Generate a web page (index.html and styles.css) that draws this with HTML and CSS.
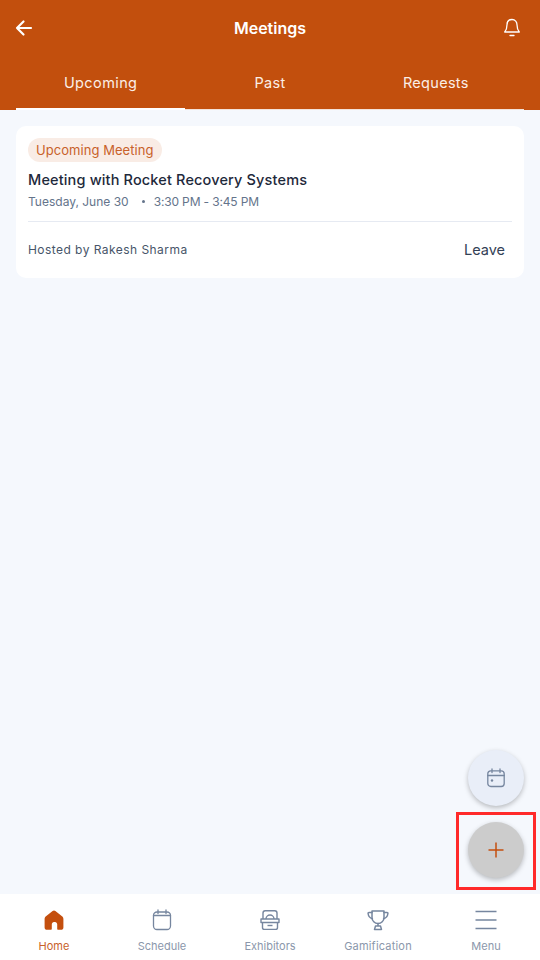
FILE: index.html
```html
<!DOCTYPE html>
<html>
<head>
    <title>Meetings</title>
    <meta charset="UTF-8">
    <link rel="stylesheet" href="styles.css">
</head>
<body>
    <div class="page">
        <header class="top">
            <div class="top_bar">
                <svg class="top_icon" viewBox="0 0 20 20" fill="none" stroke="#fff" stroke-width="2.200" stroke-linecap="round" stroke-linejoin="round">
                    <path d="M17 10H3M9.500 3.500 3 10l6.500 6.500"/>
                </svg>
                <h1>Meetings</h1>
                <svg class="top_icon" viewBox="0 0 20 20" fill="none" stroke="#fff" stroke-width="1.300" stroke-linecap="round" stroke-linejoin="round">
                    <path d="M10 1.500c-3.200 0-5 2.400-5 5.300 0 3.700-.6 5.300-2.300 7.200h14.600c-1.700-1.900-2.300-3.500-2.300-7.200 0-2.900-1.800-5.300-5-5.300Z"/>
                    <path d="M8 17.500h4"/>
                </svg>
            </div>
            <nav class="tabs">
                <div class="tab tab_on">Upcoming</div>
                <div class="tab">Past</div>
                <div class="tab tab_last">Requests</div>
            </nav>
        </header>

        <main class="content">
            <section class="card">
                <span class="tag">Upcoming Meeting</span>
                <h2>Meeting with Rocket Recovery Systems</h2>
                <div class="when">
                    <span>Tuesday, June 30</span>
                    <i></i>
                    <span class="time">3:30 PM - 3:45 PM</span>
                </div>
                <div class="card_foot">
                    <span class="host">Hosted by Rakesh Sharma</span>
                    <span class="leave">Leave</span>
                </div>
            </section>

            <div class="fabs">
                <div class="fab">
                    <svg width="20" height="20" viewBox="0 0 20 20" fill="none" stroke="#76869f" stroke-width="1.300" stroke-linecap="round">
                        <rect x="1.800" y="2.800" width="16.400" height="15.700" rx="3"/>
                        <path d="M1.800 7.500h16.400M6 1v3.500M14 1v3.500"/>
                        <circle cx="6" cy="12.500" r="1.200" fill="#76869f" stroke="none"/>
                    </svg>
                </div>
                <div class="fab_mark">
                    <div class="fab fab_add">
                        <svg width="18" height="18" viewBox="0 0 18 18" fill="none" stroke="#c44f0e" stroke-width="1.500">
                            <path d="M1.500 9h15M9 1.500v15"/>
                        </svg>
                    </div>
                </div>
            </div>
        </main>

        <footer class="bottom">
            <div class="nav_item nav_on">
                <svg viewBox="0 0 24 24"><path fill="#c44f0e" d="M12 2.600c.5 0 1 .2 1.400.5l6.600 5.200c.9.700 1.400 1.700 1.400 2.800v8.300c0 1.400-1 2.400-2.400 2.400h-2.800c-.6 0-1-.4-1-1v-4.600c0-1.300-1-2.300-2.200-2.300h-1c-1.200 0-2.200 1-2.200 2.300v4.600c0 .6-.4 1-1 1H5c-1.400 0-2.400-1-2.400-2.400v-8.300c0-1.100.5-2.100 1.400-2.800l6.600-5.200c.4-.3.900-.5 1.400-.5Z"/></svg>
                <span>Home</span>
            </div>
            <div class="nav_item">
                <svg viewBox="0 0 24 24" fill="none" stroke="#76869f" stroke-width="1.300" stroke-linecap="round">
                    <rect x="3.500" y="4" width="17" height="17.500" rx="3.500"/>
                    <path d="M3.500 7.500h17M8 2v3.500M16 2v3.500"/>
                </svg>
                <span>Schedule</span>
            </div>
            <div class="nav_item">
                <svg viewBox="0 0 24 24" fill="none" stroke="#76869f" stroke-width="1.400" stroke-linejoin="round">
                    <path d="M5 11V5c0-1.300 1-2.200 2.200-2.200h9.600C18 2.800 19 3.700 19 5v6"/>
                    <path d="M8 11c0-2.300 1.800-4 4-4s4 1.700 4 4"/>
                    <path d="M3 11h18v3.500H3zM4.500 14.500v5c0 1.100.8 1.900 1.900 1.900h11.200c1.100 0 1.900-.8 1.900-1.900v-5"/>
                    <path d="M9.500 17.500h5"/>
                </svg>
                <span>Exhibitors</span>
            </div>
            <div class="nav_item nav_wide">
                <svg viewBox="0 0 24 24" fill="none" stroke="#76869f" stroke-width="1.500" stroke-linecap="round" stroke-linejoin="round">
                    <path d="M6 3h12v6.500c0 3.400-2.700 6-6 6s-6-2.600-6-6V3Z"/>
                    <path d="M6 4.500H3c-.6 0-1 .4-.9 1 .3 2.600 1.700 4.500 4.300 5.300M18 4.500h3c.6 0 1 .4.900 1-.3 2.600-1.700 4.500-4.300 5.300"/>
                    <path d="M12 15.500v2.500M9.500 18h5l1 3.400h-7z"/>
                </svg>
                <span>Gamification</span>
            </div>
            <div class="nav_item">
                <svg viewBox="0 0 24 24" fill="none" stroke="#76869f" stroke-width="1.700">
                    <path d="M1.500 3.500h21M1.500 12h21M1.500 20.500h21"/>
                </svg>
                <span>Menu</span>
            </div>
        </footer>
    </div>
</body>
</html>
```
FILE: styles.css
```css
*{
    box-sizing: border-box;
}
html,body{
    margin: 0;
    height: 100%;
}
body{
    font-family: "Inter", "Noto Sans", sans-serif;
    background: #f5f8fd;
}
h1,h2{
    margin: 0;
}
.page{
    height: 960px;
    display: flex;
    flex-direction: column;
}
.top{
    height: 110px;
    flex: none;
    background: #c24f0d;
    padding: 0 16px;
    color: #fff;
}
.top_bar{
    height: 56px;
    display: flex;
    align-items: center;
    justify-content: space-between;
}
.top_icon{
    width: 20px;
    height: 20px;
    margin-left: -2px;
    margin-right: 4px;
}
.top_bar svg:last-child{
    margin-right: 2px;
    margin-left: 0;
}
h1{
    font-size: 16px;
    font-weight: 600;
}
.tabs{
    display: grid;
    grid-template-columns: repeat(3, 1fr);
    height: 54px;
}
.tab{
    display: flex;
    align-items: center;
    justify-content: center;
    font-size: 14.500px;
    font-weight: 400;
    letter-spacing: .3px;
    color: #fbeee6;
    border-bottom: 1px solid #f3e2d8;
}
.tab_last{
    padding-right: 7px;
}
.tab_on{
    border-bottom: 2px solid #fff;
    letter-spacing: .4px;
}
.content{
    flex: 1;
    padding: 16px;
    display: flex;
    flex-direction: column;
    justify-content: space-between;
}
.card{
    background: #fff;
    border-radius: 10px;
    height: 152px;
    padding: 12px;
}
.tag{
    display: inline-block;
    height: 24px;
    line-height: 24px;
    padding: 0 8.500px 0 8px;
    border-radius: 12px;
    background: #f9ece5;
    color: #c8612a;
    font-size: 13px;
    letter-spacing: .05px;
}
h2{
    margin-top: 7px;
    font-size: 14.500px;
    line-height: 22px;
    font-weight: 500;
    letter-spacing: .15px;
    color: #1e293b;
}
.when{
    display: flex;
    align-items: center;
    height: 20px;
    font-size: 12px;
    color: #64748b;
}
.when i{
    width: 3px;
    height: 3px;
    border-radius: 50%;
    background: #64748b;
    margin: 0 9px 0 13px;
}
.time{
    letter-spacing: -.15px;
}
.card_foot{
    margin-top: 10px;
    border-top: 1px solid #e6eaf2;
    display: flex;
    align-items: center;
    justify-content: space-between;
    height: 56px;
}
.host{
    font-size: 12px;
    letter-spacing: .45px;
    color: #475569;
}
.leave{
    font-size: 14.500px;
    font-weight: 400;
    color: #334155;
    margin-right: 7px;
}
.fabs{
    display: flex;
    flex-direction: column;
    align-items: flex-end;
    gap: 16px;
}
.fab{
    width: 56px;
    height: 56px;
    border-radius: 50%;
    background: #e9eef8;
    box-shadow: 0 2px 5px rgba(0,0,0,.25);
    display: flex;
    align-items: center;
    justify-content: center;
}
.fab_add{
    background: #cccccc;
}
.fab_mark{
    position: relative;
}
.fab_mark::after{
    content: "";
    position: absolute;
    left: -12px;
    top: -10px;
    width: 74px;
    height: 72px;
    border: 3px solid #ff2a2a;
}
.bottom{
    height: 66px;
    flex: none;
    background: #fff;
    display: flex;
}
.nav_item{
    flex: 1;
    display: flex;
    flex-direction: column;
    align-items: center;
    padding-top: 14px;
    font-size: 11px;
    color: #8b97ab;
}
.nav_item svg{
    width: 24px;
    height: 24px;
}
.nav_item span{
    margin-top: 7px;
}
.nav_wide span{
    letter-spacing: .2px;
}
.nav_on{
    color: #c8612a;
}
```
